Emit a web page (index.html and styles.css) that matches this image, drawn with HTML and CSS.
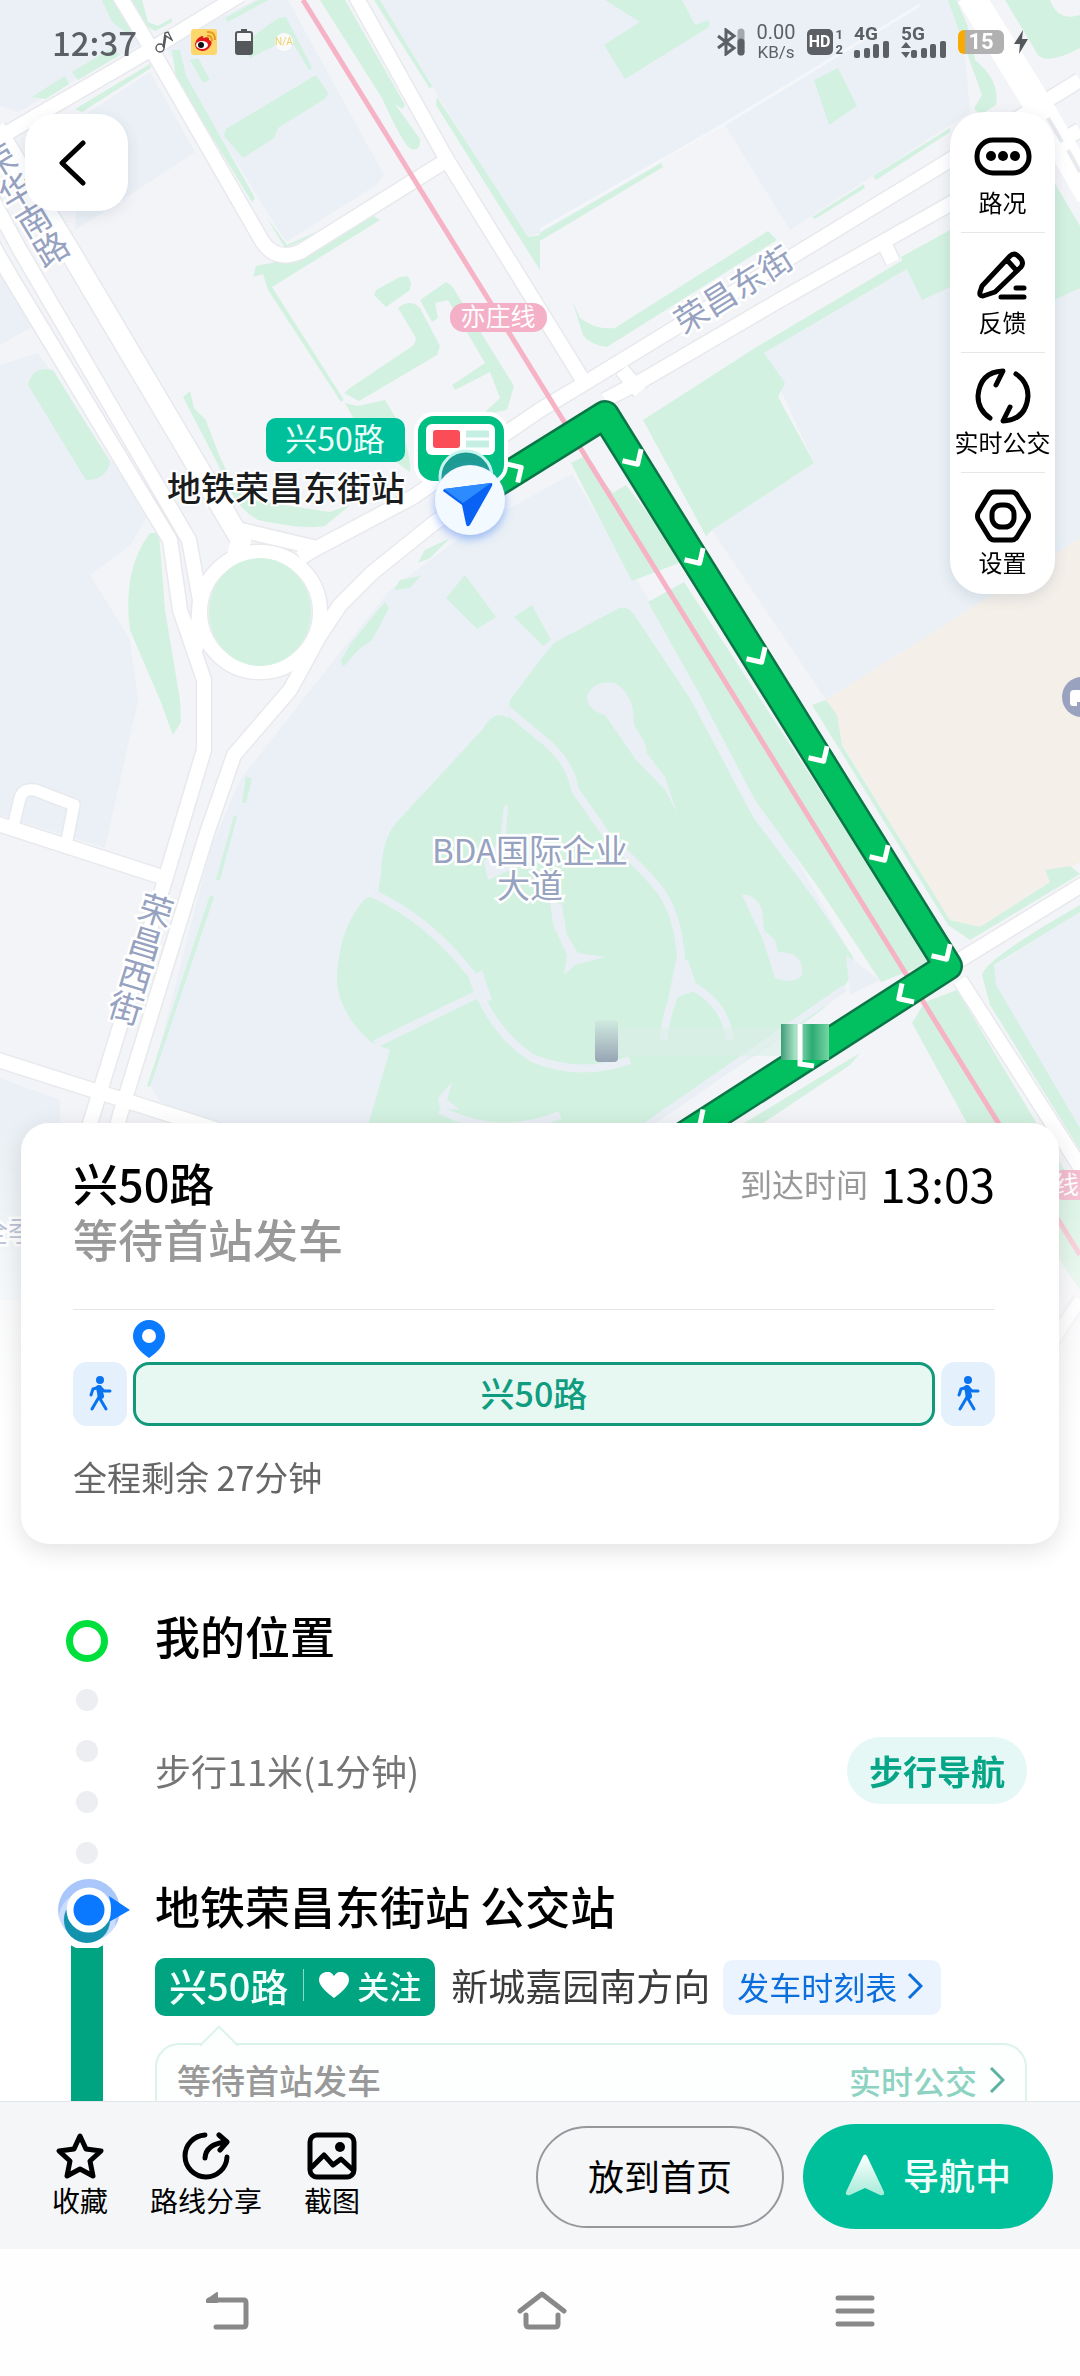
FILE: index.html
```html
<!DOCTYPE html>
<html lang="zh-CN">
<head>
    <meta charset="UTF-8">
    <meta name="viewport" content="width=device-width, initial-scale=1.0">
    <title>兴50路 公交导航</title>
    <link rel="stylesheet" href="styles.css">
</head>
<body>
    <div class="app">
        <main class="content">
            <svg class="map" viewBox="0 0 1080 1420" preserveAspectRatio="xMidYMin slice">
                <defs>
                    <linearGradient id="fade" x1="0" y1="0" x2="0" y2="1">
                        <stop offset="0" stop-color="#fff" stop-opacity="0"/>
                        <stop offset="1" stop-color="#fff"/>
                    </linearGradient>
                    <linearGradient id="smudge" x1="0" y1="0" x2="0" y2="1">
                        <stop offset="0" stop-color="#d0ebe0"/>
                        <stop offset="1" stop-color="#98a4b4"/>
                    </linearGradient>
                    <linearGradient id="smudge2" x1="0" y1="0" x2="1" y2="0">
                        <stop offset="0" stop-color="#3f9c78"/>
                        <stop offset="0.3" stop-color="#a9e3c6"/>
                        <stop offset="0.65" stop-color="#2dab74"/>
                        <stop offset="1" stop-color="#77d5a4"/>
                    </linearGradient>
                    <filter id="glow" x="-50%" y="-50%" width="200%" height="200%">
                        <feDropShadow dx="0" dy="4" stdDeviation="5" flood-color="#5b8ff5" flood-opacity="0.6"/>
                    </filter>
                    <path id="chevron" d="M-6 -11 L5 0 L-6 11"/>
                </defs>
                <rect width="1080" height="1420" fill="#f3f4f7"/>

                <!-- blocks -->
                <g fill="#eaf0f5">
                    <path d="M0 0H116L143 42 18 112 0 106z"/>
                    <path d="M80 118L150 72 195 152 125 198 75 230z"/>
                    <path d="M165 45L255 0H288L384 175 378 184 286 242 185 80z"/>
                    <path d="M380 0H960L970 112 790 230 725 125 540 233 524 238z"/>
                    <path d="M712 530L814 463 764 353 950 245H1080V540L826 700z"/>
                    <path d="M572 474L650 602 740 760 860 970 650 1125H175L150 1085 210 850 240 780 330 665 390 590 470 530z"/>
                    <path d="M0 365L38 353 148 515 130 545 90 575 130 640 138 700 105 848 0 815zM0 270L35 325 0 345z"/>
                    <path d="M0 1078L60 1100V1300H0z"/>
                    <path d="M994 966L1080 912V1140L992 990z"/>
                </g>
                <path fill="#f4efe8" d="M826 700L965 612 1080 538V862L980 927 950 920 840 740z"/>
                <path d="M540 230L728 122 920 5" fill="none" stroke="#f4f6f9" stroke-width="3"/>

                <!-- parks -->
                <g fill="#d3f1e0">
                    <path d="M32 97L65 76 69 84 46 99zM72 72L112 48 120 55 78 80z"/>
                    <path d="M102 0H118L143 42 128 34 112 22zM128 0H142L148 22 158 26 172 18V22L155 31 145 25z"/>
                    <path d="M75 109L150 64 151 68 82 112zM172 50H180L186 76 255 198 252 202 176 78zM190 60L198 58 210 80 203 83z"/>
                    <path d="M224 136L226 129 316 75 328 93 326 98 278 128 274 138 243 158z"/>
                    <path d="M240 46L278 18 286 17 312 68 309 70 290 38 250 58zM225 18L262-2H272L228 22z"/>
                    <path d="M267 218L287 245 325 228V231L285 248z"/>
                    <path d="M320 0H345L405 105 402 109 395 104 420 139Q421 152 411 149 403 145 382 98z"/>
                    <path d="M374 0H380L432 86 430 89zM437 97L528 237 540 235V270L524 245 436 105z"/>
                    <path d="M253 277L256 266 285 260 372 215 380 220 272 287 344 400 341 402 268 290 263 274z"/>
                    <path d="M344 393L359 401 437 355 440 346 420 308Q410 298 398 308L416 338 414 345 350 388z"/>
                    <path d="M374 295L376 290 400 277 408 276 411 283 410 290 386 307z"/>
                    <path d="M420 300L446 282 452 286 514 386 507 410 482 415 500 398 490 372 455 390 452 385 485 363 448 300 435 303 438 318 432 322z"/>
                    <path d="M345 403L358 406 385 400 400 425Q412 460 410 472L396 462 360 430z"/>
                    <path d="M183 397L190 391 194 408 206 420Q232 495 250 500L330 512 350 505 325 526Q305 530 258 520 236 508 226 480z"/>
                    <path d="M28 385Q32 366 53 370L110 462Q106 480 86 480z"/>
                    <path d="M150 533H159L165 610 180 700 181 722 173 735 160 700 130 630Q122 570 150 533z"/>
                    <path d="M418 563L425 550 450 538 430 558zM394 590L400 580 420 576 410 588zM341 660L352 642 370 620 385 602 389 608 372 640 358 650 343 667z"/>
                    <path d="M465 575L496 617 477 629 446 598zM514 617L532 605 551 640 543 646z"/>
                    <path d="M246 776L252 779 246 803 242 803zM234 815L237 817 220 880 216 880zM210 895L214 897 150 1087 147 1086z"/>
                    <path d="M510 700L540 660 554 643 619 608Q628 607 633 613L691 700 753 817 815 900 853 957Q858 985 808 1020L650 1125H368L390 1050 372 1043Q335 1010 337 975 340 930 360 905 365 895 377 897 380 880 381 873 382 840 396 823L482 730Q495 708 508 718z"/>
                    <path d="M571 463L583 457 613 493 626 485 684 561 632 581z"/>
                    <path d="M648 602L684 582 932 962 881 982 820 890 755 800 700 695z"/>
                    <path d="M912 1023L925 1002 957 990 1080 1196V1290L967 1123zM650 1180L860 1053 850 1065 700 1165z"/>
                    <path d="M643 420L755 348 950 232V244L764 353 785 383 778 397 814 463 712 530 706 536z"/>
                    <path d="M901 257L950 230V287L922 300zM1050 175L1080 226V288L1050 302z"/>
                    <path d="M605 0H682L695 25 709 20V27L625 79 604 45 640 22z"/>
                    <path d="M814 80L838 68 857 106 829 125zM540 233L661 163 663 167 540 241zM812 217L864 184 865 188 815 219zM873 176L950 128V132L876 180z"/>
                    <path d="M572 300L580 318Q595 330 615 328L768 231 777 240 607 347Q590 345 583 335z"/>
                    <path d="M1005 0L1038 55Q1048 65 1080 48V15Q1058 22 1050 0z"/>
                    <path d="M948 0H956L967 24 975 60Q1000 80 996 105L980 115 974 108 982 95z"/>
                    <path d="M826 700L837 715 842 745 950 920 980 927 1050 882 1045 870 1070 866 1080 874 970 940 948 925 812 705z"/>
                    <path d="M982 975Q984 960 1080 905V912L994 965 996 985 1080 1128V1150L990 1005z"/>
                </g>

                <!-- golf course paths and ponds -->
                <g fill="none" stroke="#e9eff5" stroke-width="8">
                    <path d="M372 893Q430 920 472 975 490 1030 532 1058 580 1078 630 1060"/>
                    <path d="M482 992L375 1044M505 708L540 737Q570 760 575 790L610 840Q640 865 660 890 682 920 682 980 665 1010 664 1040"/>
                    <path d="M684 982Q725 1000 730 1040M440 1110Q500 1140 560 1115"/>
                </g>
                <g fill="#e9eff5">
                    <path d="M587 697Q592 680 615 683 635 695 634 725 648 745 646 752L665 777 677 813 665 790 636 760 605 715Q587 710 587 697z"/>
                    <path d="M742 895Q755 893 762 910L764 930 775 940 778 952Q805 952 802 975 795 985 775 978L763 940z"/>
                    <path d="M550 900L562 905 567 935 578 953 605 957 575 965 564 975 567 955 553 925z"/>
                    <path d="M508 805L506 832 510 870 488 880 484 862 500 840 504 806zM452 1082L447 1100 460 1110 440 1108 438 1098z"/>
                    <path d="M470 978L482 970 492 1000 478 1002zM676 960H688L698 990 668 1000zM846 955L880 980 850 995z"/>
                </g>
                <path d="M845 988L640 1130" fill="none" stroke="#e9eff5" stroke-width="7"/>

                <!-- roads: edge first, white on top -->
                <g fill="none" stroke-linejoin="round">
                    <g stroke="#e7e9ed" stroke-width="17">
                        <path d="M-5 140L150 50 240-5M119-5L152 50 262 241Q275 262 300 252L447 160M355-5L447 160 586 385"/>
                        <path d="M-10 195L20 250 189 540 200 600 196 650M-10 240L8 272 170 540 180 610 204 680V750L165 880 85 1140 40 1300"/>
                        <path d="M241 530L317 548 413 497 540 410 585 383 950 160 1080 80M300 558L317 548"/>
                        <path d="M605 400L643 380 780 300 950 204 1080 130M622 370L640 392M885 245L893 262"/>
                        <path d="M615 410L540 456 434 523 372 573 340 605 320 635 290 690 234 755 207 833 120 1115 70 1300"/>
                        <circle cx="260" cy="612" r="60"/>
                        <path d="M950 966L1090 880M-5 823L162 877M-5 1059L240 1137"/>
                        <path d="M960 980L1090 1182M1080 1300L1000 1420"/>
                        <path stroke-width="14" d="M14 823L20 798Q23 788 35 790L74 805 66 845"/>
                        <path stroke-width="23" d="M-5 128L69 250 241 540"/>
                    </g>
                    <g stroke="#fff" stroke-width="14">
                        <path d="M-5 140L150 50 240-5M119-5L152 50 262 241Q275 262 300 252L447 160M355-5L447 160 586 385"/>
                        <path d="M-10 195L20 250 189 540 200 600 196 650M-10 240L8 272 170 540 180 610 204 680V750L165 880 85 1140 40 1300"/>
                        <path d="M241 530L317 548 413 497 540 410 585 383 950 160 1080 80M300 558L317 548"/>
                        <path d="M605 400L643 380 780 300 950 204 1080 130M622 370L640 392M885 245L893 262"/>
                        <path d="M615 410L540 456 434 523 372 573 340 605 320 635 290 690 234 755 207 833 120 1115 70 1300"/>
                        <circle cx="260" cy="612" r="60"/>
                        <path d="M950 966L1090 880M-5 823L162 877M-5 1059L240 1137M960 980L1090 1182"/>
                        <path stroke-width="11" d="M14 823L20 798Q23 788 35 790L74 805 66 845M1080 1300L1000 1420"/>
                        <path stroke-width="20" d="M-5 128L69 250 241 540 236 560"/>
                        <path stroke-width="28" d="M970-5L1038 105 1090 195"/>
                    </g>
                </g>
                <ellipse cx="260" cy="612" rx="51" ry="54" fill="#d3f1e0"/>
                <path d="M1048 118L1062 142M1068 150L1080 172" stroke="#e8eaee" stroke-width="4"/>

                <path d="M303 0L1080 1255" stroke="#f5b3c5" stroke-width="5"/>

                <!-- bus route -->
                <g fill="none" stroke-linejoin="round">
                    <path d="M480 493L605 415 948 966 640 1164" stroke="#0a7546" stroke-width="30"/>
                    <path d="M480 493L605 415 948 966 640 1164" stroke="#02bf5f" stroke-width="25"/>
                    <g stroke="#fff" stroke-width="5">
                        <use href="#chevron" transform="translate(517 470) rotate(-32)"/>
                        <use href="#chevron" transform="translate(635 460) rotate(58)"/>
                        <use href="#chevron" transform="translate(697 559) rotate(58)"/>
                        <use href="#chevron" transform="translate(759 658) rotate(58)"/>
                        <use href="#chevron" transform="translate(821 757) rotate(58)"/>
                        <use href="#chevron" transform="translate(882 856) rotate(58)"/>
                        <use href="#chevron" transform="translate(944 955) rotate(58)"/>
                        <use href="#chevron" transform="translate(903 996) rotate(147)"/>
                        <use href="#chevron" transform="translate(704 1122) rotate(147)"/>
                    </g>
                </g>
                <rect x="595" y="1020" width="23" height="42" rx="4" fill="url(#smudge)"/>
                <rect x="618" y="1028" width="163" height="28" fill="#dcefe8" opacity="0.6"/>
                <rect x="781" y="1024" width="48" height="36" fill="url(#smudge2)"/>
                <path d="M800 1024V1064L814 1066" fill="none" stroke="#fff" stroke-width="5"/>

                <!-- labels -->
                <g class="road-label">
                    <text transform="translate(740 300) rotate(-32)" text-anchor="middle">荣昌东街</text>
                    <text class="vertical" transform="translate(141 959) rotate(17)" text-anchor="middle">荣昌西街</text>
                    <text class="vertical" transform="translate(25 205) rotate(-31)" text-anchor="middle">荣华南路</text>
                    <text x="530" y="863" text-anchor="middle">BDA国际企业</text>
                    <text x="530" y="898" text-anchor="middle">大道</text>
                    <text class="small" x="-20" y="1242">全季</text>
                </g>
                <rect x="450" y="303" width="97" height="29" rx="14" fill="#f3b0c6"/>
                <text class="line-label" x="498" y="326" text-anchor="middle">亦庄线</text>
                <rect x="1050" y="1170" width="60" height="30" rx="14" fill="#f3b0c6"/>
                <text class="line-label" x="1054" y="1194">线</text>
                <circle cx="1082" cy="697" r="20" fill="#99a3bf"/>
                <path d="M1070 694q0-4 4-4h12v16h-3v-4h-6v4h-4q-3 0-3-3z" fill="#fff"/>

                <!-- boarding stop -->
                <rect x="266" y="418" width="139" height="44" rx="10" fill="#00bf9b"/>
                <text class="stop-line" x="335" y="451" text-anchor="middle">兴50路</text>
                <text class="stop-name" x="286" y="501" text-anchor="middle">地铁荣昌东街站</text>
                <rect x="416" y="414" width="90" height="69" rx="18" fill="#00bf83" stroke="#fff" stroke-width="4"/>
                <rect x="426" y="424" width="69" height="31" rx="6" fill="#fff"/>
                <rect x="433" y="430" width="27" height="18" rx="3" fill="#fa4d58"/>
                <path d="M466 434H489M466 444H489" stroke="#c5efe2" stroke-width="7"/>
                <circle cx="466" cy="477" r="26" fill="#1c9c93" stroke="#c9f5ef" stroke-width="3"/>
                <g filter="url(#glow)">
                    <circle cx="470" cy="500" r="35" fill="#f2faff"/>
                </g>
                <path d="M444 489L491 483 Q493 483 492 486L470 525Q467 528 466 524L462 505 443 491z" fill="#0a62f5"/>
                <path d="M444 489L491 483 463 503z" fill="#2b8bff"/>

                <rect y="1123" width="1080" height="297" fill="url(#fade)"/>
            </svg>

            <header class="status-bar">
                <div class="status-left">
                    <span class="clock">12:37</span>
                    <svg width="18" height="22" viewBox="0 0 18 22" fill="none" stroke="#55585b" stroke-width="1.4">
                        <circle cx="5" cy="17" r="4"/><path d="M8 16L10 2 13 1 17 9 11 5 9 17"/>
                    </svg>
                    <svg width="26" height="26" viewBox="0 0 26 26">
                        <rect width="26" height="26" rx="3" fill="#fdd76b"/>
                        <path d="M4 15Q5 9 11 7q2 0 1 2 7-2 6 2 4 1 2 5-3 6-9 6-7-1-7-7z" fill="#e01a1a"/>
                        <ellipse cx="11" cy="16" rx="6" ry="4" fill="#fff"/>
                        <circle cx="10" cy="16" r="3" fill="#111"/>
                        <path d="M16 7q5-1 5 5M16 3q8-1 8 8" fill="none" stroke="#ea9a1c" stroke-width="2"/>
                    </svg>
                    <svg width="18" height="26" viewBox="0 0 18 26">
                        <path d="M6 0h6v3h-6z" fill="#55585b"/>
                        <rect x="1" y="3" width="16" height="22" rx="2" fill="#f4f6f8" stroke="#55585b" stroke-width="2"/>
                        <path d="M1 12h16v12h-16z" fill="#55585b"/>
                    </svg>
                    <span class="na">N/A</span>
                </div>
                <div class="status-right">
                    <svg width="30" height="28" viewBox="0 0 30 28" fill="none" stroke="#5c6064" stroke-width="3">
                        <path d="M2 8L18 20 10 26V2L18 8 2 20"/>
                        <path d="M25 4V24" stroke="#a4a8ad" stroke-width="7" stroke-linecap="round"/>
                        <path d="M25 14V24" stroke-width="7" stroke-linecap="round"/>
                    </svg>
                    <div class="speed"><span class="rate">0.00</span><span>KB/s</span></div>
                    <div class="hd"><span class="hd-box">HD</span><span class="sims"><span>1</span><span>2</span></span></div>
                    <div class="signal">
                        <span>4G</span>
                        <svg width="36" height="17" viewBox="0 0 36 17" fill="#5c6064"><rect y="9" width="6" height="8" rx="2"/><rect x="10" y="7" width="6" height="10" rx="2"/><rect x="19" y="3" width="6" height="14" rx="2"/><rect x="29" width="6" height="17" rx="2"/></svg>
                    </div>
                    <div class="signal">
                        <span>5G</span>
                        <svg width="46" height="17" viewBox="-10 0 46 17" fill="#5c6064"><path d="M-10 7l5-6 5 6zM-10 11h9l-4 6z"/><rect y="9" width="6" height="8" rx="2"/><rect x="10" y="7" width="6" height="10" rx="2"/><rect x="19" y="3" width="6" height="14" rx="2"/><rect x="29" width="6" height="17" rx="2"/></svg>
                    </div>
                    <div class="power">
                        <span class="battery">15</span>
                        <svg width="14" height="24" viewBox="0 0 14 24" fill="#55585b"><path d="M9 0L0 14H6L5 24 14 9H8z"/></svg>
                    </div>
                </div>
            </header>

            <div class="map-controls">
                <button class="back" aria-label="返回">
                    <svg width="28" height="48" viewBox="0 0 28 48" fill="none" stroke="#000" stroke-width="5" stroke-linecap="round" stroke-linejoin="round"><path d="M24 4L3 24 24 44"/></svg>
                </button>
                <div class="toolbar">
                    <button>
                        <svg width="58" height="58" viewBox="0 0 58 58"><rect x="3" y="13" width="52" height="33" rx="16" fill="none" stroke="#000" stroke-width="5"/><circle cx="17" cy="29" r="5"/><circle cx="29" cy="29" r="5"/><circle cx="41" cy="29" r="5"/></svg>
                        <span>路况</span>
                    </button>
                    <button>
                        <svg width="58" height="58" viewBox="0 0 58 58" fill="none" stroke="#000" stroke-width="5" stroke-linecap="round" stroke-linejoin="round"><path d="M8 39L36 9Q40 5 44 9L47 12Q50 16 47 20L21 45 9 49Q5 49 6 45zM33 13L43 24M27 50H50M42 41H50"/></svg>
                        <span>反馈</span>
                    </button>
                    <button>
                        <svg width="58" height="58" viewBox="0 0 58 58" fill="none" stroke="#000" stroke-width="5" stroke-linecap="round" stroke-linejoin="round"><path d="M16 51Q4 43 4 29 6 5 29 4L22 18M42 7Q54 15 54 29 52 53 29 54L36 40"/></svg>
                        <span>实时公交</span>
                    </button>
                    <button>
                        <svg width="58" height="58" viewBox="0 0 58 58" fill="none" stroke="#000" stroke-width="5" stroke-linejoin="round"><path d="M20 5H38Q41 5 43 8L54 26Q55 29 54 32L43 50Q41 53 38 53H20Q17 53 15 50L4 32Q3 29 4 26L15 8Q17 5 20 5z"/><rect x="18" y="18" width="22" height="22" rx="9"/></svg>
                        <span>设置</span>
                    </button>
                </div>
            </div>

            <section class="card">
                <div class="card-head">
                    <h1>兴50路</h1>
                    <p class="arrive">到达时间 <strong>13:03</strong></p>
                </div>
                <p class="waiting">等待首站发车</p>
                <div class="progress">
                    <svg class="pin" width="32" height="38" viewBox="0 0 32 38"><path d="M16 0A16 16 0 0 1 32 16Q32 27 16 38 0 27 0 16A16 16 0 0 1 16 0z" fill="#0a7bff"/><circle cx="16" cy="16" r="7" fill="#fff"/></svg>
                    <div class="segments">
                        <span class="walk">
                            <svg width="26" height="36" viewBox="0 0 26 36" fill="none" stroke="#0a73f0" stroke-width="3" stroke-linecap="round" stroke-linejoin="round"><circle cx="13" cy="4" r="4" fill="#0a73f0" stroke="none"/><path d="M12 11V21L19 33M12 21L5 33M4 19L6 13 13 11 17 15 23 15"/><path d="M12 12L14 20" stroke-width="6"/></svg>
                        </span>
                        <span class="ride">兴50路</span>
                        <span class="walk">
                            <svg width="26" height="36" viewBox="0 0 26 36" fill="none" stroke="#0a73f0" stroke-width="3" stroke-linecap="round" stroke-linejoin="round"><circle cx="13" cy="4" r="4" fill="#0a73f0" stroke="none"/><path d="M12 11V21L19 33M12 21L5 33M4 19L6 13 13 11 17 15 23 15"/><path d="M12 12L14 20" stroke-width="6"/></svg>
                        </span>
                    </div>
                </div>
                <p class="remain">全程剩余 27分钟</p>
            </section>

            <section class="steps">
                <div class="step start">
                    <div class="rail"><span class="ring"></span></div>
                    <h2>我的位置</h2>
                </div>
                <div class="step walking">
                    <div class="rail dots"><i></i><i></i><i></i><i></i></div>
                    <div class="walk-row">
                        <p>步行11米(1分钟)</p>
                        <button class="walk-nav">步行导航</button>
                    </div>
                </div>
                <div class="step">
                    <div class="rail bus-rail">
                        <svg width="76" height="72" viewBox="0 0 76 72">
                            <path d="M16 64h32v8h-32z" fill="#00a480"/>
                            <circle cx="32" cy="42" r="30" fill="#fff"/>
                            <circle cx="34" cy="32" r="31" fill="#a9c7fb"/>
                            <circle cx="32" cy="42" r="26" fill="none" stroke="#fff" stroke-width="5" opacity="0.4"/>
                            <circle cx="32" cy="42" r="23" fill="#1292ac"/>
                            <circle cx="34" cy="32" r="19" fill="#0a78ff" stroke="#fff" stroke-width="7"/>
                            <path d="M54 18L75 32 54 44Q58 31 54 18z" fill="#0a78ff"/>
                        </svg>
                        <span class="bar"></span>
                    </div>
                    <div class="station">
                        <h2>地铁荣昌东街站 公交站</h2>
                        <div class="line-row">
                            <button class="line-badge">
                                <span>兴50路</span>
                                <span class="follow">
                                    <svg width="30" height="26" viewBox="0 0 30 26"><path d="M15 26Q0 15 0 8A8 8 0 0 1 15 4 8 8 0 0 1 30 8Q30 15 15 26z" fill="#fff"/></svg>
                                    关注
                                </span>
                            </button>
                            <span class="direction">新城嘉园南方向</span>
                            <a class="timetable" href="#">发车时刻表
                                <svg width="16" height="26" viewBox="0 0 16 26" fill="none" stroke="#0a6fdc" stroke-width="3"><path d="M2 1L14 13 2 25"/></svg>
                            </a>
                        </div>
                        <div class="bubble">
                            <span>等待首站发车</span>
                            <a href="#">实时公交
                                <svg width="16" height="26" viewBox="0 0 16 26" fill="none" stroke="#5cb3a0" stroke-width="3"><path d="M2 1L14 13 2 25"/></svg>
                            </a>
                        </div>
                    </div>
                </div>
            </section>
        </main>

        <footer class="actions">
            <button class="tool">
                <svg width="50" height="48" viewBox="0 0 50 48" fill="none" stroke="#000" stroke-width="5" stroke-linejoin="round"><path d="M25 4L31 17 46 19 35 29 38 44 25 37 12 44 15 29 4 19 19 17z"/></svg>
                <span>收藏</span>
            </button>
            <button class="tool">
                <svg width="50" height="48" viewBox="0 0 50 48" fill="none" stroke="#000" stroke-width="5" stroke-linecap="round" stroke-linejoin="round"><path d="M24 3A21 21 0 1 0 46 25M24 26Q25 12 45 10M38 3L46 10 39 18"/></svg>
                <span>路线分享</span>
            </button>
            <button class="tool">
                <svg width="50" height="48" viewBox="0 0 50 48" fill="none" stroke="#000" stroke-width="5" stroke-linejoin="round"><rect x="3" y="3" width="44" height="42" rx="7"/><path d="M4 36L17 23 26 33 34 27 46 38"/><circle cx="33" cy="15" r="5" fill="#000" stroke="none"/></svg>
                <span>截图</span>
            </button>
            <button class="to-home">放到首页</button>
            <button class="navigating">
                <svg width="40" height="42" viewBox="0 0 40 42">
                    <defs><linearGradient id="arrow" x1="0" y1="0" x2="0" y2="1"><stop offset="0" stop-color="#fff"/><stop offset="1" stop-color="#a6ecd9"/></linearGradient></defs>
                    <path d="M18 2Q20-1 22 2L39 38Q40 42 35 41L20 34 5 41Q0 42 1 38z" fill="url(#arrow)"/>
                </svg>
                <span>导航中</span>
            </button>
        </footer>

        <nav class="system-nav">
            <button aria-label="返回"><svg width="44" height="38" viewBox="0 0 44 38" fill="none" stroke="#898989" stroke-width="5" stroke-linejoin="round" stroke-linecap="round"><path d="M4 8H39Q41 8 41 11V32Q41 35 38 35H11"/><path d="M2 8L12 1V10H2z" fill="#898989" stroke-width="2"/></svg></button>
            <button aria-label="主页"><svg width="52" height="40" viewBox="0 0 52 40" fill="none" stroke="#898989" stroke-width="5" stroke-linejoin="round" stroke-linecap="round"><path d="M4 20L26 3 48 20M10 24V33Q10 36 13 36H39Q42 36 42 33V24"/></svg></button>
            <button aria-label="最近任务"><svg width="40" height="32" viewBox="0 0 40 32" fill="none" stroke="#898989" stroke-width="5" stroke-linecap="round"><path d="M3 3H37M3 16H37M3 29H37"/></svg></button>
        </nav>
    </div>
</body>
</html>
```
FILE: styles.css
```css
* {
    box-sizing: border-box;
}

body {
    margin: 0;
    font-family: "Noto Sans CJK SC", sans-serif;
    color: #000;
    background: #fff;
}

h1, h2, p {
    margin: 0;
}

h1, h2 {
    font-size: 45px;
    font-weight: 500;
    line-height: 56px;
}

button {
    margin: 0;
    padding: 0;
    border: none;
    background: none;
    font-family: inherit;
    color: inherit;
    cursor: pointer;
}

a {
    text-decoration: none;
}

svg {
    flex: none;
}

.app {
    display: flex;
    flex-direction: column;
    height: 100vh;
}

.content {
    position: relative;
    flex: 1;
    min-height: 0;
    overflow-y: auto;
    scrollbar-width: none;
}

/* map */
.map {
    position: absolute;
    top: 0;
    left: 0;
    width: 100%;
    height: 1420px;
    z-index: -1;
}

.road-label text {
    font-size: 33px;
    fill: #96a2bf;
    stroke: #fff;
    stroke-width: 5px;
    paint-order: stroke;
}

.road-label .vertical {
    writing-mode: vertical-rl;
    font-size: 34px;
}

.road-label .small {
    font-size: 28px;
}

.line-label {
    font-size: 25px;
    fill: #fff;
}

.stop-line {
    font-size: 32px;
    fill: #e9fffa;
}

.stop-name {
    font-size: 34px;
    font-weight: 500;
    fill: #1b1c1e;
    stroke: #fff;
    stroke-width: 4px;
    paint-order: stroke;
}

/* status bar */
.status-bar {
    display: flex;
    justify-content: space-between;
    height: 88px;
    padding: 0 52px 4px 52px;
    font-family: Roboto, "Noto Sans CJK SC", sans-serif;
    color: #5c6064;
}

.status-left, .status-right {
    display: flex;
    align-items: center;
}

.status-left {
    gap: 18px;
}

.status-right {
    gap: 11px;
}

.clock {
    font-family: "Noto Sans CJK SC", sans-serif;
    font-size: 33px;
    font-weight: 500;
    line-height: 40px;
}

.na {
    margin-left: 4px;
    font-size: 10px;
    line-height: 18px;
    color: #ecd26a;
    background: #fafafa;
    border-radius: 9px;
}

.speed {
    display: flex;
    flex-direction: column;
    align-items: center;
    font-size: 17px;
    line-height: 20px;
}

.speed .rate {
    font-size: 20px;
}

.hd {
    display: flex;
    align-items: center;
    gap: 3px;
}

.hd-box {
    width: 26px;
    font-size: 16px;
    font-weight: 700;
    line-height: 26px;
    text-align: center;
    color: #fff;
    background: #5c6064;
    border-radius: 5px;
}

.sims {
    display: flex;
    flex-direction: column;
    font-size: 13px;
    font-weight: 700;
    line-height: 15px;
}

.signal {
    display: flex;
    flex-direction: column;
    align-items: flex-end;
    font-size: 19px;
    font-weight: 700;
    line-height: 15px;
}

.signal span {
    align-self: flex-start;
}

.power {
    display: flex;
    align-items: center;
    gap: 10px;
}

.battery {
    width: 46px;
    font-size: 22px;
    font-weight: 700;
    line-height: 24px;
    text-align: center;
    color: #fff;
    background: linear-gradient(90deg, #f7ab00 7px, #b1b1b1 7px);
    border-radius: 6px;
}

/* map controls */
.map-controls {
    display: flex;
    justify-content: space-between;
    align-items: flex-start;
    padding: 24px 25px 529px;
}

.back {
    display: flex;
    align-items: center;
    justify-content: center;
    width: 103px;
    height: 97px;
    margin-top: 2px;
    padding-right: 8px;
    background: #fff;
    border-radius: 30px;
    box-shadow: 0 4px 14px rgba(60, 80, 120, 0.12);
}

.toolbar {
    display: flex;
    flex-direction: column;
    width: 105px;
    padding: 0 0 2px;
    background: #fff;
    border-radius: 34px;
    box-shadow: 0 4px 14px rgba(60, 80, 120, 0.14);
}

.toolbar button {
    display: flex;
    flex-direction: column;
    align-items: center;
    gap: 2px;
    padding: 15px 0;
    font-size: 24px;
    line-height: 30px;
    white-space: nowrap;
    background: linear-gradient(#e6e6e8, #e6e6e8) center top / 84px 1px no-repeat;
}

.toolbar button:first-child {
    background: none;
}

/* trip card */
.card {
    margin: 0 21px;
    padding: 32px 64px 42px 52px;
    background: #fff;
    border-radius: 28px;
    box-shadow: 0 6px 24px rgba(0, 0, 0, 0.12);
}

.card-head {
    display: flex;
    justify-content: space-between;
    align-items: center;
}

.arrive {
    display: flex;
    align-items: center;
    gap: 12px;
    font-size: 32px;
    line-height: 56px;
    color: #999;
}

.arrive strong {
    font-size: 46px;
    font-weight: 400;
    color: #000;
}

.waiting {
    padding-bottom: 42px;
    font-size: 45px;
    font-weight: 500;
    line-height: 56px;
    color: #999;
    border-bottom: 1px solid #e6e6e6;
}

.progress {
    padding-top: 10px;
}

.pin {
    display: block;
    margin-left: 60px;
}

.segments {
    display: flex;
    gap: 6px;
    margin-top: 4px;
}

.walk {
    display: flex;
    align-items: center;
    justify-content: center;
    width: 54px;
    background: #e5f0fd;
    border-radius: 14px;
}

.ride {
    flex: 1;
    padding-bottom: 2px;
    font-size: 34px;
    font-weight: 500;
    line-height: 56px;
    text-align: center;
    color: #109c7f;
    background: #e7f8f3;
    border: 3px solid #12997c;
    border-radius: 16px;
}

.remain {
    margin-top: 26px;
    font-size: 34px;
    line-height: 50px;
    color: #666;
}

/* steps */
.steps {
    padding: 64px 53px 40px 55px;
}

.step {
    display: grid;
    grid-template-columns: 64px 1fr;
    column-gap: 36px;
}

.rail {
    display: flex;
    flex-direction: column;
    align-items: center;
}

.start h2, .start .rail {
    height: 66px;
    justify-content: center;
}

.ring {
    width: 42px;
    height: 42px;
    border: 7px solid #00e03c;
    border-radius: 50%;
}

.dots {
    justify-content: space-around;
    height: 204px;
}

.dots i {
    width: 22px;
    height: 22px;
    background: #edeef2;
    border-radius: 50%;
}

.walk-row {
    display: flex;
    align-items: center;
    justify-content: space-between;
    padding-bottom: 12px;
    font-size: 36px;
    color: #757575;
}

.walk-nav {
    padding: 0 22px;
    font-size: 34px;
    font-weight: 700;
    line-height: 67px;
    color: #06a587;
    background: #e5f8f6;
    border-radius: 34px;
}

.bus-rail svg {
    align-self: flex-start;
}

.bar {
    flex: 1;
    width: 32px;
    margin-top: -2px;
    background: #00a480;
}

.line-row {
    display: flex;
    align-items: center;
    margin-top: 24px;
}

.line-badge {
    display: flex;
    align-items: center;
    gap: 15px;
    padding: 0 14px 4px;
    font-size: 38px;
    font-weight: 500;
    line-height: 54px;
    color: #f0fffb;
    background: #00a480;
    border-radius: 10px;
}

.follow {
    display: flex;
    align-items: center;
    gap: 8px;
    padding-left: 15px;
    font-size: 32px;
    line-height: 32px;
    border-left: 1px solid #8fd8c6;
}

.direction {
    margin: 0 13px 0 16px;
    padding-bottom: 4px;
    font-size: 37px;
    line-height: 54px;
    white-space: nowrap;
    color: #3c3c3c;
}

.timetable {
    display: flex;
    align-items: center;
    gap: 10px;
    padding: 0 18px 2px 14px;
    font-size: 32px;
    line-height: 53px;
    white-space: nowrap;
    color: #0a6fdc;
    background: #eaf3fe;
    border-radius: 10px;
}

.bubble {
    position: relative;
    display: flex;
    align-items: flex-start;
    justify-content: space-between;
    height: 120px;
    margin-top: 27px;
    padding: 10px 20px;
    font-size: 34px;
    font-weight: 500;
    line-height: 50px;
    color: #999;
    background: #fcfffe;
    border: 2px solid #dcf3ea;
    border-radius: 24px;
}

.bubble::before {
    content: "";
    position: absolute;
    top: -14px;
    left: 48px;
    width: 26px;
    height: 26px;
    background: #fcfffe;
    border: solid #dcf3ea;
    border-width: 2px 0 0 2px;
    transform: rotate(45deg);
}

.bubble a {
    display: flex;
    align-items: center;
    gap: 12px;
    font-size: 32px;
    color: #8ed2c1;
}

/* bottom bar */
.actions {
    display: flex;
    align-items: center;
    padding: 22px 27px 20px 52px;
    background: #f4f6f8;
    border-top: 1px solid #e2e6e8;
}

.tool {
    display: flex;
    flex-direction: column;
    align-items: center;
    gap: 2px;
    margin-right: 42px;
    padding-bottom: 4px;
    font-size: 28px;
    line-height: 36px;
}

.to-home {
    flex: 1;
    max-width: 248px;
    margin-left: auto;
    margin-right: 19px;
    padding-bottom: 4px;
    font-size: 36px;
    line-height: 94px;
    border: 2px solid #96989c;
    border-radius: 51px;
}

.navigating {
    display: flex;
    align-items: center;
    justify-content: center;
    gap: 18px;
    width: 250px;
    padding-bottom: 4px;
    font-size: 36px;
    font-weight: 500;
    line-height: 101px;
    color: #f0fffb;
    background: #00bf9b;
    border-radius: 53px;
}

.system-nav {
    display: flex;
    justify-content: space-around;
    align-items: center;
    height: 127px;
    padding: 0 72px;
    background: #fefefe;
}
```
